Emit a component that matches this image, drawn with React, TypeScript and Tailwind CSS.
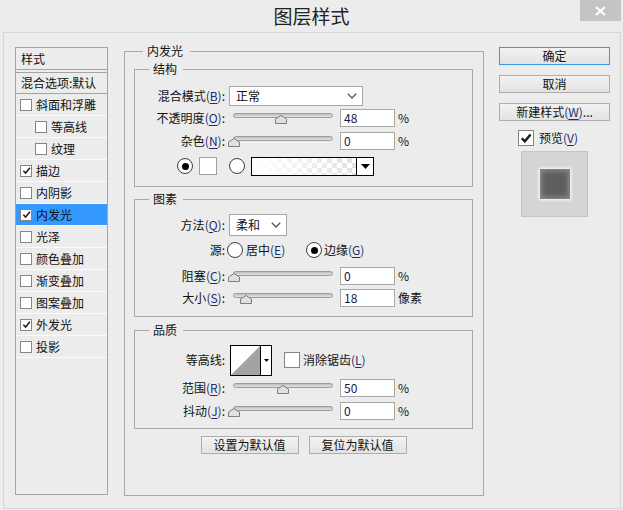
import type { ReactNode } from 'react'

const effects = [
  { name: '斜面和浮雕', on: false },
  { name: '等高线', on: false, sub: true },
  { name: '纹理', on: false, sub: true },
  { name: '描边', on: true },
  { name: '内阴影', on: false },
  { name: '内发光', on: true, active: true },
  { name: '光泽', on: false },
  { name: '颜色叠加', on: false },
  { name: '渐变叠加', on: false },
  { name: '图案叠加', on: false },
  { name: '外发光', on: true },
  { name: '投影', on: false },
]

// mnemonic letter, e.g. (B)
function Mn({ k }: { k: string }) {
  return (
    <span className="text-[#1b2d6e]">
      (<span className="underline underline-offset-2">{k}</span>)
    </span>
  )
}

function Check({ on, big }: { on: boolean; big?: boolean }) {
  return (
    <span
      className={
        'flex shrink-0 items-center justify-center border border-[#858585] bg-white ' +
        (big ? 'h-[16px] w-[16px]' : 'h-[12px] w-[12px]')
      }
    >
      {on && (
        <svg width={big ? 12 : 9} height={big ? 12 : 9} viewBox="0 0 10 10">
          <polyline points="1.5,5.2 4,7.8 8.8,2" fill="none" stroke="#1e1e1e" strokeWidth={big ? 2 : 1.7} />
        </svg>
      )}
    </span>
  )
}

function Radio({ on }: { on: boolean }) {
  return (
    <span className="flex h-[16px] w-[16px] shrink-0 items-center justify-center rounded-full border border-[#3c3c3c] bg-white">
      {on && <span className="h-[7px] w-[7px] rounded-full bg-black" />}
    </span>
  )
}

function Select({ value, size }: { value: string; size: string }) {
  return (
    <div className={'ml-[4px] flex items-center justify-between border border-[#a8a8a8] bg-white pl-[6px] pr-[5px] ' + size}>
      <span>{value}</span>
      <svg width="10" height="6" viewBox="0 0 10 6">
        <polyline points="0.8,0.8 5,5 9.2,0.8" fill="none" stroke="#555" strokeWidth="1.3" />
      </svg>
    </div>
  )
}

// at = thumb centre, px from track start
function Slider({ at }: { at: number }) {
  return (
    <div className="relative ml-[8px] h-[12px] w-[100px] pt-[1px]">
      <div className="h-[5px] rounded-full border border-[#9c9c9c] bg-linear-to-b from-[#bdbdbd] to-[#e4e4e4]" />
      <svg className="absolute top-[3px]" style={{ left: at - 6 }} width="12" height="9" viewBox="0 0 12 9">
        <path d="M0.5 8.5V4L6 0.5L11.5 4V8.5Z" fill="#e0e0e0" stroke="#7d7d7d" />
      </svg>
    </div>
  )
}

function Num({ v, unit = '%' }: { v: string; unit?: string }) {
  return (
    <>
      <div className="ml-[7px] flex h-[18px] w-[55px] items-center border border-[#a8a8a8] bg-white pl-[3px] text-[#16164a]">
        {v}
      </div>
      <span className="ml-[3px]">{unit}</span>
    </>
  )
}

function Label({ children }: { children: ReactNode }) {
  return <div className="w-[90px] shrink-0 text-right">{children}</div>
}

function Group({ title, className, children }: { title: string; className: string; children: ReactNode }) {
  return (
    <fieldset className={'border border-[#a8a8a8] ' + className}>
      <legend className="ml-[14px] pl-[4px] pr-[6px] leading-[14px]">{title}</legend>
      {children}
    </fieldset>
  )
}

function Btn({ children, focus, size }: { children: ReactNode; focus?: boolean; size: string }) {
  return (
    <div
      className={
        'flex items-center justify-center border bg-linear-to-b from-[#f2f2f2] to-[#e3e3e3] ' +
        (focus ? 'border-[#3a97e8] ' : 'border-[#adadad] ') +
        size
      }
    >
      {children}
    </div>
  )
}

export default function App() {
  return (
    <div className="h-[510px] w-[623px] overflow-hidden bg-[#ececec] font-['Noto_Sans_CJK_SC','Noto_Sans',sans-serif] text-[12px] leading-[14px] text-[#111] select-none">
      <div className="relative flex h-[32px] items-center justify-center">
        <span className="text-[19px] leading-[22px] text-[#222]">图层样式</span>
        <div className="absolute right-[2px] top-0 flex h-[21px] w-[41px] items-center justify-center bg-[#c4c4c4]">
          <svg width="11" height="10" viewBox="0 0 11 10">
            <path d="M1 1L10 9M10 1L1 9" stroke="#fff" strokeWidth="2.2" />
          </svg>
        </div>
      </div>

      <div className="ml-[3px] flex h-[477px] w-[618px] border border-[#d6d6d6] pl-[11px]">
        {/* style list */}
        <div className="mt-[14px] h-[448px] w-[93px] shrink-0 border border-[#a4a4a4]">
          <div className="flex h-[22px] items-center border-b border-[#a4a4a4] pl-[5px]">样式</div>
          <div className="mt-[2px] flex h-[22px] items-center border-y border-[#a4a4a4] pl-[5px] whitespace-nowrap">
            混合选项:默认
          </div>
          {effects.map(e => (
            <div
              key={e.name}
              className={
                'flex h-[22px] items-center gap-[4px] border-b border-[#fbfbfb] ' +
                (e.sub ? 'pl-[19px] ' : 'pl-[4px] ') +
                (e.active ? 'bg-[#3399ff]' : '')
              }
            >
              <Check on={e.on} />
              <span>{e.name}</span>
            </div>
          ))}
        </div>

        {/* inner glow settings */}
        <fieldset className="ml-[16px] mt-[11px] h-[452px] w-[360px] shrink-0 border border-[#a8a8a8] pb-0 pl-[9px] pr-[10px] pt-[4px]">
          <legend className="ml-[9px] pl-[4px] pr-[7px] leading-[14px]">内发光</legend>

          <Group title="结构" className="w-[339px] pb-[5px] pt-[9px]">
            <div className="flex h-[21px] items-center">
              <Label>
                混合模式<Mn k="B" />:
              </Label>
              <Select value="正常" size="h-[20px] w-[134px]" />
            </div>
            <div className="flex h-[24px] items-center">
              <Label>
                不透明度<Mn k="O" />:
              </Label>
              <Slider at={48} />
              <Num v="48" />
            </div>
            <div className="flex h-[21px] items-center">
              <Label>
                杂色<Mn k="N" />:
              </Label>
              <Slider at={0.5} />
              <Num v="0" />
            </div>
            <div className="flex h-[30px] items-center pl-[42px]">
              <Radio on />
              <div className="ml-[6px] h-[18px] w-[18px] border border-[#a0a0a0] bg-white" />
              <div className="ml-[12px]">
                <Radio on={false} />
              </div>
              <div className="ml-[6px] flex h-[19px] w-[123px] border border-black">
                <div className="flex-1 bg-[repeating-conic-gradient(#e2e2e2_0_25%,#ffffff_0_50%)] bg-[length:10px_10px]">
                  <div className="h-full bg-linear-to-r from-white to-transparent" />
                </div>
                <div className="flex w-[17px] items-center justify-center border-l border-black bg-white">
                  <svg width="9" height="5" viewBox="0 0 9 5">
                    <path d="M0 0H9L4.5 5Z" fill="#000" />
                  </svg>
                </div>
              </div>
            </div>
          </Group>

          <Group title="图素" className="mt-[5px] w-[339px] pb-[9px] pt-[6px]">
            <div className="flex h-[25px] items-center">
              <Label>
                方法<Mn k="Q" />:
              </Label>
              <Select value="柔和" size="h-[22px] w-[58px]" />
            </div>
            <div className="flex h-[26px] items-center">
              <Label>源:</Label>
              <div className="ml-[2px]">
                <Radio on={false} />
              </div>
              <span className="ml-[3px] w-[60px]">
                居中<Mn k="E" />
              </span>
              <Radio on />
              <span className="ml-[2px]">
                边缘<Mn k="G" />
              </span>
            </div>
            <div className="flex h-[25px] items-center">
              <Label>
                阻塞<Mn k="C" />:
              </Label>
              <Slider at={0.5} />
              <Num v="0" />
            </div>
            <div className="flex h-[19px] items-center">
              <Label>
                大小<Mn k="S" />:
              </Label>
              <Slider at={13} />
              <Num v="18" unit="像素" />
            </div>
          </Group>

          <Group title="品质" className="mt-[6px] w-[339px] pb-[6px] pt-[7px]">
            <div className="flex h-[32px] items-center">
              <Label>等高线:</Label>
              <div className="ml-[5px] flex h-[31px] w-[42px] border border-black bg-white">
                <svg width="29" height="29" viewBox="0 0 29 29">
                  <path d="M0 29L29 0V29Z" fill="#a3a3a3" />
                </svg>
                <div className="flex flex-1 items-center justify-center border-l border-black">
                  <svg width="5" height="3" viewBox="0 0 5 3">
                    <path d="M0 0H5L2.5 3Z" fill="#000" />
                  </svg>
                </div>
              </div>
              <div className="ml-[12px]">
                <Check on={false} big />
              </div>
              <span className="ml-[3px]">
                消除锯齿<Mn k="L" />
              </span>
            </div>
            <div className="flex h-[24px] items-center">
              <Label>
                范围<Mn k="R" />:
              </Label>
              <Slider at={49.5} />
              <Num v="50" />
            </div>
            <div className="flex h-[22px] items-center">
              <Label>
                抖动<Mn k="J" />:
              </Label>
              <Slider at={0.5} />
              <Num v="0" />
            </div>
          </Group>

          <div className="mt-[7px] flex justify-center gap-[10px]">
            <Btn size="h-[18px] w-[98px]">设置为默认值</Btn>
            <Btn size="h-[18px] w-[98px]">复位为默认值</Btn>
          </div>
        </fieldset>

        {/* actions */}
        <div className="ml-[15px] mt-[14px] flex w-[111px] shrink-0 flex-col">
          <Btn focus size="h-[18px] w-[111px]">确定</Btn>
          <div className="mt-[10px]">
            <Btn size="h-[18px] w-[111px]">取消</Btn>
          </div>
          <div className="mt-[10px]">
            <Btn size="h-[18px] w-[111px]">
              新建样式<Mn k="W" />...
            </Btn>
          </div>
          <div className="mt-[9px] flex h-[16px] items-center pl-[19px]">
            <Check on big />
            <span className="ml-[5px]">
              预览<Mn k="V" />
            </span>
          </div>
          <div className="ml-[22px] mt-[5px] flex h-[66px] w-[67px] items-center justify-center border border-[#c4c4c4] bg-[#d5d5d5]">
            <div className="h-[30px] w-[30px] bg-[#5e5e5e] shadow-[0_0_3px_1px_#ffffff,inset_0_0_5px_2px_#8c8c8c]" />
          </div>
        </div>
      </div>
    </div>
  )
}
